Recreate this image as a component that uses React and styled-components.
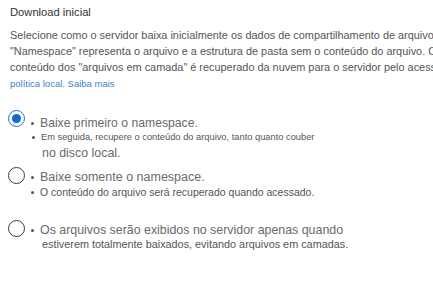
import React from 'react';
import styled, { createGlobalStyle } from 'styled-components';

const GlobalStyle = createGlobalStyle`
  html, body {
    margin: 0;
    padding: 0;
    background: #ffffff;
  }
  body {
    font-family: "Liberation Sans", Arial, sans-serif;
    color: #444;
  }
`;

const Page = styled.div`
  width: 433px;
  height: 286px;
  overflow: hidden;
  padding: 4px 0 0 10px;
  box-sizing: border-box;
`;

const Heading = styled.div`
  font-size: 11.2px;
  line-height: 16px;
  color: #333;
`;

const Paragraph = styled.div`
  margin-top: 7px;
  font-size: 10.9px;
  line-height: 16px;
  color: #555;
  white-space: nowrap;
`;

const Links = styled.div`
  margin-top: 2px;
  font-size: 9.5px;
  line-height: 14px;
  color: #3b83c8;
`;

const Options = styled.div`
  display: flex;
  flex-direction: column;
  margin-top: 19px;
  margin-left: -2px;
`;

const Option = styled.div`
  display: flex;
  align-items: flex-start;
  gap: 4px;
  margin-bottom: ${(p) => p.$gap || 0}px;
`;

const Radio = styled.span`
  flex: none;
  width: 17px;
  height: 17px;
  border-radius: 50%;
  box-sizing: border-box;
  border: ${(p) => (p.$checked ? '1.5px solid #1a73d9' : '1.3px solid #3a3a3a')};
  display: flex;
  align-items: center;
  justify-content: center;
  background: #fff;

  &::after {
    content: '';
    display: ${(p) => (p.$checked ? 'block' : 'none')};
    width: 9px;
    height: 9px;
    border-radius: 50%;
    background: #0a6ed1;
  }
`;

const Body = styled.div`
  display: flex;
  flex-direction: column;
  padding-top: 1px;
`;

const Line = styled.div`
  display: flex;
  align-items: center;
  height: 16px;
  white-space: nowrap;
  font-size: ${(p) => p.$size}px;
  padding-left: ${(p) => p.$indent || 0}px;
  margin-top: ${(p) => p.$top || 0}px;
`;

const Main = styled(Line)`
  color: #6a6a6a;
`;

const Sub = styled(Line)`
  color: #555;
`;

const Bullet = styled.span`
  flex: none;
  width: 3px;
  height: 3px;
  border-radius: 50%;
  background: #555;
  margin: 0 6px 0 2px;
`;

export default function App() {
  return (
    <>
      <GlobalStyle />
      <Page>
        <Heading>Download inicial</Heading>
        <Paragraph>
          Selecione como o servidor baixa inicialmente os dados de compartilhamento de arquivos do Azure.
          <br />
          "Namespace" representa o arquivo e a estrutura de pasta sem o conteúdo do arquivo. O
          <br />
          conteúdo dos "arquivos em camada" é recuperado da nuvem para o servidor pelo acesso ou
        </Paragraph>
        <Links>política local. Saiba mais</Links>
        <Options>
          <Option $gap={6}>
            <Radio $checked />
            <Body>
              <Main $size={12.2} $top={4}>
                <Bullet />Baixe primeiro o namespace.
              </Main>
              <Sub $size={9.3} $indent={1} $top={-2}>
                <Bullet />Em seguida, recupere o conteúdo do arquivo, tanto quanto couber
              </Sub>
              <Main $size={12.4} $indent={13} $top={0}>no disco local.</Main>
            </Body>
          </Option>
          <Option $gap={20}>
            <Radio />
            <Body>
              <Main $size={12.5} $top={1}>
                <Bullet />Baixe somente o namespace.
              </Main>
              <Sub $size={10.5} $top={-1}>
                <Bullet />O conteúdo do arquivo será recuperado quando acessado.
              </Sub>
            </Body>
          </Option>
          <Option>
            <Radio />
            <Body>
              <Main $size={12.4} $top={1}>
                <Bullet />Os arquivos serão exibidos no servidor apenas quando
              </Main>
              <Sub $size={10.85} $indent={13} $top={-2}>
                estiverem totalmente baixados, evitando arquivos em camadas.
              </Sub>
            </Body>
          </Option>
        </Options>
      </Page>
    </>
  );
}
